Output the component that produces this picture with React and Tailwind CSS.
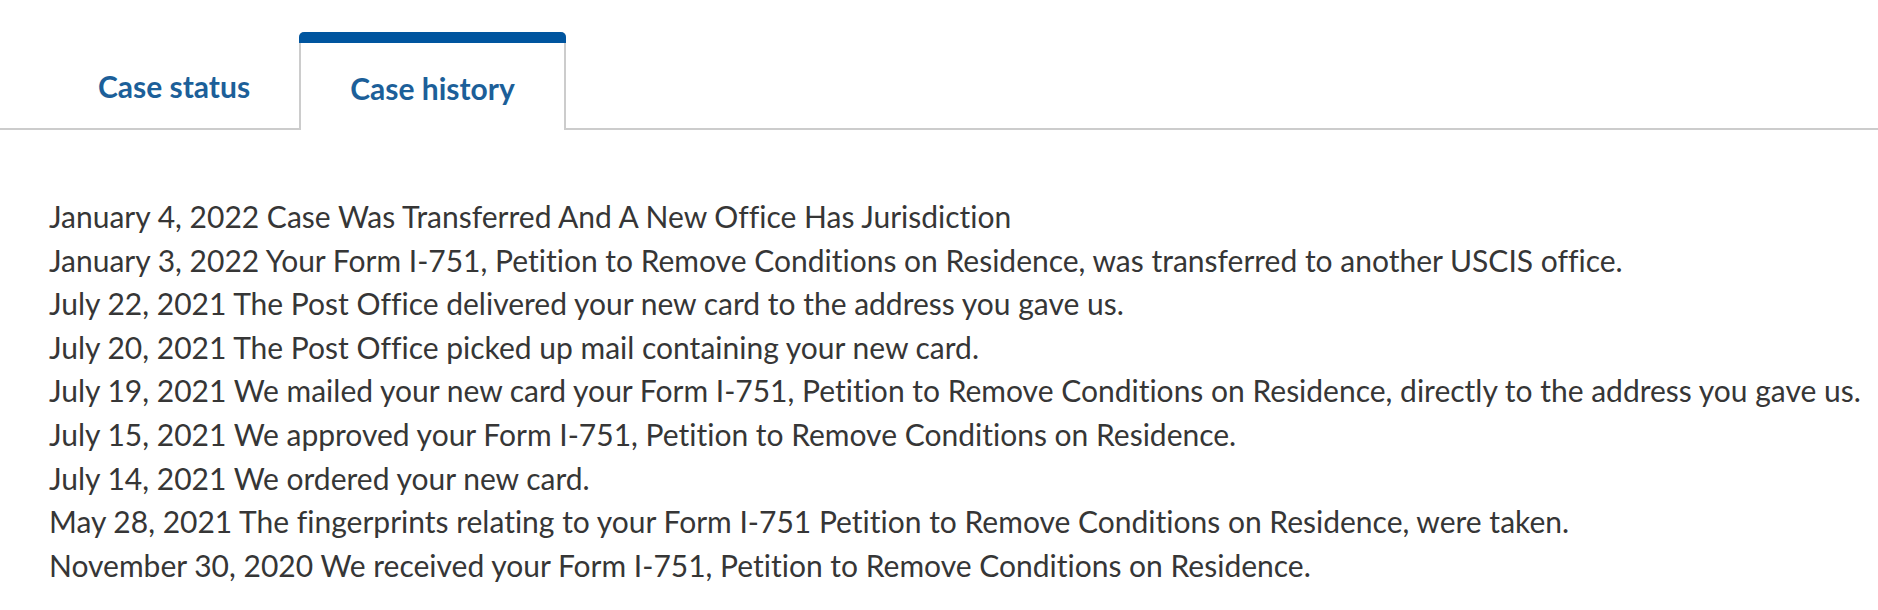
const HISTORY = [
  "January 4, 2022 Case Was Transferred And A New Office Has Jurisdiction",
  "January 3, 2022 Your Form I-751, Petition to Remove Conditions on Residence, was transferred to another USCIS office.",
  "July 22, 2021 The Post Office delivered your new card to the address you gave us.",
  "July 20, 2021 The Post Office picked up mail containing your new card.",
  "July 19, 2021 We mailed your new card your Form I-751, Petition to Remove Conditions on Residence, directly to the address you gave us.",
  "July 15, 2021 We approved your Form I-751, Petition to Remove Conditions on Residence.",
  "July 14, 2021 We ordered your new card.",
  "May 28, 2021 The fingerprints relating to your Form I-751 Petition to Remove Conditions on Residence, were taken.",
  "November 30, 2020 We received your Form I-751, Petition to Remove Conditions on Residence.",
];

export default function App() {
  return (
    <div className="w-[1878px] h-[610px] bg-white font-['Lato',sans-serif] [font-variant-ligatures:none] overflow-hidden">
      {/* Tabs */}
      <div className="pt-[32px] border-b-2 border-[#cccccc] flex items-end pl-[49px]">
        <button className="w-[250px] h-[96px] flex items-center justify-center pt-[12px] text-[30px] font-bold text-[#1c5f99]">
          Case status
        </button>
        <button className="relative -mb-[2px] w-[267px] h-[98px] bg-white border-x-2 border-[#cccccc] rounded-t-[5px] flex items-center justify-center pt-[14px] text-[30px] font-bold text-[#1c5f99]">
          <span className="absolute top-0 -left-[2px] -right-[2px] h-[11px] bg-[#00559f] rounded-t-[5px]" />
          Case history
        </button>
      </div>

      {/* History list */}
      <ul className="pt-[65px] pl-[49px] text-[30px] leading-[43.6px] text-[#363636]">
        {HISTORY.map((line) => (
          <li key={line} className="whitespace-nowrap">
            {line}
          </li>
        ))}
      </ul>
    </div>
  );
}
